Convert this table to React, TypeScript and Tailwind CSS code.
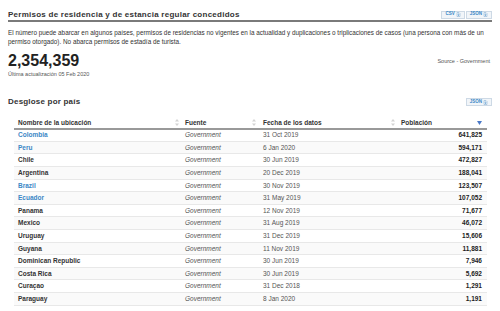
import React from 'react';

type Row = { name: string; link: boolean; date: string; value: string };

const rows: Row[] = [
  { name: 'Colombia', link: true, date: '31 Oct 2019', value: '641,825' },
  { name: 'Peru', link: true, date: '6 Jan 2020', value: '594,171' },
  { name: 'Chile', link: false, date: '30 Jun 2019', value: '472,827' },
  { name: 'Argentina', link: false, date: '20 Dec 2019', value: '188,041' },
  { name: 'Brazil', link: true, date: '30 Nov 2019', value: '123,507' },
  { name: 'Ecuador', link: true, date: '31 May 2019', value: '107,052' },
  { name: 'Panama', link: false, date: '12 Nov 2019', value: '71,677' },
  { name: 'Mexico', link: false, date: '31 Aug 2019', value: '46,072' },
  { name: 'Uruguay', link: false, date: '31 Dec 2019', value: '15,606' },
  { name: 'Guyana', link: false, date: '11 Nov 2019', value: '11,881' },
  { name: 'Dominican Republic', link: false, date: '30 Jun 2019', value: '7,946' },
  { name: 'Costa Rica', link: false, date: '30 Jun 2019', value: '5,692' },
  { name: 'Curaçao', link: false, date: '31 Dec 2018', value: '1,291' },
  { name: 'Paraguay', link: false, date: '8 Jan 2020', value: '1,191' },
];

const DlIcon = () => (
  <svg width="5" height="5" viewBox="0 0 10 10" className="ml-[1px]">
    <path d="M2 1h4l2 2v6H2z" fill="none" stroke="#7aa7cf" strokeWidth="1" />
    <path d="M5 3v4M3.5 5.5L5 7l1.5-1.5" fill="none" stroke="#3a87c6" strokeWidth="1" />
  </svg>
);

const Btn = ({ label }: { label: string }) => (
  <span className="flex items-center h-[8px] px-[3px] border border-[#cdd9e5] bg-[#f1f5f9] text-[4.5px] font-bold text-[#3a87c6] leading-none">
    {label}
    <DlIcon />
  </span>
);

const SortIcon = () => (
  <svg width="4" height="7" viewBox="0 0 4 7">
    <path d="M2 0L4 2.6H0z" fill="#d4d4d4" />
    <path d="M2 7L4 4.4H0z" fill="#d4d4d4" />
  </svg>
);

const SortDown = () => (
  <svg width="5" height="4" viewBox="0 0 5 4">
    <path d="M0 0h5L2.5 4z" fill="#4a79c8" />
  </svg>
);

export default function App() {
  return (
    <div className="w-[500px] h-[311px] overflow-hidden bg-white px-2 pt-[9px] font-['Liberation_Sans',Arial,sans-serif] text-[#333]">
      <div className="flex items-center justify-between h-[13px] border-b-2 border-[#7a7a7a]">
        <h1 className="text-[8px] font-bold tracking-[0.25px] text-[#333]">
          Permisos de residencia y de estancia regular concedidos
        </h1>
        <div className="flex gap-[1px]">
          <Btn label="CSV" />
          <Btn label="JSON" />
        </div>
      </div>

      <p className="mt-[7px] text-[6.35px] leading-[8.5px] text-[#333]">
        El número puede abarcar en algunos países, permisos de residencias no vigentes en la actualidad y duplicaciones o triplicaciones de casos (una persona con más de un permiso otorgado). No abarca permisos de estadía de turista.
      </p>

      <div className="mt-[6px] flex items-center justify-between h-[18px]">
        <span className="text-[16px] font-bold leading-[18px] text-[#222]">2,354,359</span>
        <span className="text-[5.5px] text-[#555] pr-[2px]">Source - Government</span>
      </div>
      <div className="mt-[1px] text-[5.5px] leading-[7px] text-[#555]">Última actualización 05 Feb 2020</div>

      <div className="mt-[18px] flex items-center justify-between h-[12px]">
        <h2 className="text-[8px] font-bold tracking-[0.2px] text-[#333]">Desglose por país</h2>
        <Btn label="JSON" />
      </div>

      <table className="mt-[10px] ml-[6px] w-[473px] border-collapse text-[6.5px]">
        <thead>
          <tr className="h-[10px] border-b-2 border-[#999]">
            <th className="w-[167px] pl-[4px] pr-[2px] font-bold text-left text-[#333]">
              <div className="flex items-center justify-between">
                <span>Nombre de la ubicación</span>
                <SortIcon />
              </div>
            </th>
            <th className="w-[77px] pl-[4px] pr-[2px] font-bold text-left text-[#333]">
              <div className="flex items-center justify-between">
                <span>Fuente</span>
                <SortIcon />
              </div>
            </th>
            <th className="w-[139px] pl-[5px] pr-[2px] font-bold text-left text-[#333]">
              <div className="flex items-center justify-between">
                <span>Fecha de los datos</span>
                <SortIcon />
              </div>
            </th>
            <th className="w-[90px] pl-[4px] pr-[5px] font-bold text-left text-[#333]">
              <div className="flex items-center justify-between">
                <span>Población</span>
                <SortDown />
              </div>
            </th>
          </tr>
        </thead>
        <tbody>
          {rows.map((r, i) => (
            <tr key={r.name} className={`h-[12.6px] border-b border-[#e8e8e8] ${i % 2 ? 'bg-[#fafafa]' : 'bg-white'}`}>
              <td className={`pl-[4px] font-bold ${r.link ? 'text-[#3a87c6]' : 'text-[#333]'}`}>{r.name}</td>
              <td className="pl-[4px] italic text-[#555]">Government</td>
              <td className="pl-[5px] text-[#555]">{r.date}</td>
              <td className="pr-[5px] text-right font-bold text-[#222]">{r.value}</td>
            </tr>
          ))}
        </tbody>
      </table>
    </div>
  );
}
